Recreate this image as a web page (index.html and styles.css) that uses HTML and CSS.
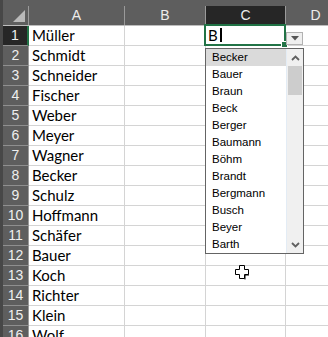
FILE: index.html
```html
<!DOCTYPE html>
<html>
<head>
<meta charset="utf-8">
<link rel="stylesheet" href="styles.css">
</head>
<body>
<div class="sheet">
  <div class="strip"></div>
  <div class="colhead-row">
    <div class="corner"><span class="tri"></span></div>
    <div class="ch cw-a">A</div>
    <div class="ch cw-b">B</div>
    <div class="ch cw-c active">C</div>
    <div class="ch cw-d">D</div>
  </div>
  <div class="rows">
    <div class="row"><div class="rh active">1</div><div class="c cw-a">Müller</div><div class="c cw-b"></div><div class="c cw-c"></div><div class="c cw-d"></div></div>
    <div class="row"><div class="rh">2</div><div class="c cw-a">Schmidt</div><div class="c cw-b"></div><div class="c cw-c"></div><div class="c cw-d"></div></div>
    <div class="row"><div class="rh">3</div><div class="c cw-a">Schneider</div><div class="c cw-b"></div><div class="c cw-c"></div><div class="c cw-d"></div></div>
    <div class="row"><div class="rh">4</div><div class="c cw-a">Fischer</div><div class="c cw-b"></div><div class="c cw-c"></div><div class="c cw-d"></div></div>
    <div class="row"><div class="rh">5</div><div class="c cw-a">Weber</div><div class="c cw-b"></div><div class="c cw-c"></div><div class="c cw-d"></div></div>
    <div class="row"><div class="rh">6</div><div class="c cw-a">Meyer</div><div class="c cw-b"></div><div class="c cw-c"></div><div class="c cw-d"></div></div>
    <div class="row"><div class="rh">7</div><div class="c cw-a">Wagner</div><div class="c cw-b"></div><div class="c cw-c"></div><div class="c cw-d"></div></div>
    <div class="row"><div class="rh">8</div><div class="c cw-a">Becker</div><div class="c cw-b"></div><div class="c cw-c"></div><div class="c cw-d"></div></div>
    <div class="row"><div class="rh">9</div><div class="c cw-a">Schulz</div><div class="c cw-b"></div><div class="c cw-c"></div><div class="c cw-d"></div></div>
    <div class="row"><div class="rh">10</div><div class="c cw-a">Hoffmann</div><div class="c cw-b"></div><div class="c cw-c"></div><div class="c cw-d"></div></div>
    <div class="row"><div class="rh">11</div><div class="c cw-a">Schäfer</div><div class="c cw-b"></div><div class="c cw-c"></div><div class="c cw-d"></div></div>
    <div class="row"><div class="rh">12</div><div class="c cw-a">Bauer</div><div class="c cw-b"></div><div class="c cw-c"></div><div class="c cw-d"></div></div>
    <div class="row"><div class="rh">13</div><div class="c cw-a">Koch</div><div class="c cw-b"></div><div class="c cw-c"></div><div class="c cw-d"></div></div>
    <div class="row"><div class="rh">14</div><div class="c cw-a">Richter</div><div class="c cw-b"></div><div class="c cw-c"></div><div class="c cw-d"></div></div>
    <div class="row"><div class="rh">15</div><div class="c cw-a">Klein</div><div class="c cw-b"></div><div class="c cw-c"></div><div class="c cw-d"></div></div>
    <div class="row"><div class="rh">16</div><div class="c cw-a">Wolf</div><div class="c cw-b"></div><div class="c cw-c"></div><div class="c cw-d"></div></div>
  </div>

  <div class="active-cell"><span class="entry">B</span><span class="caret"></span><span class="handle"></span></div>

  <div class="dd-button">
    <svg width="8" height="5" viewBox="0 0 8 5"><path d="M0 0H8L4 4.5Z" fill="#555"/></svg>
  </div>

  <div class="dd-list">
    <ul class="items">
      <li class="sel">Becker</li>
      <li>Bauer</li>
      <li>Braun</li>
      <li>Beck</li>
      <li>Berger</li>
      <li>Baumann</li>
      <li>Böhm</li>
      <li>Brandt</li>
      <li>Bergmann</li>
      <li>Busch</li>
      <li>Beyer</li>
      <li>Barth</li>
    </ul>
    <div class="scroll">
      <svg class="arr" width="9" height="6" viewBox="0 0 9 6"><path d="M1 5L4.5 1.5L8 5" fill="none" stroke="#606060" stroke-width="1.8"/></svg>
      <div class="track"><div class="thumb"></div></div>
      <svg class="arr" width="9" height="6" viewBox="0 0 9 6"><path d="M1 1L4.5 4.5L8 1" fill="none" stroke="#606060" stroke-width="1.8"/></svg>
    </div>
  </div>

  <svg class="cursor" width="17" height="17" viewBox="0 0 17 17">
    <path d="M5.5 1.5H10.5V5.5H14.5V10.5H10.5V14.5H5.5V10.5H1.5V5.5H5.5Z" fill="#fff" stroke="#000" stroke-width="1"/>
    <path d="M11 15.5V11H15" fill="none" stroke="#000" stroke-width="1"/>
  </svg>
</div>
</body>
</html>
```

FILE: styles.css
```css
html, body {
  margin: 0;
  padding: 0;
  background: #ffffff;
  overflow: hidden;
}

.sheet {
  position: relative;
  width: 328px;
  height: 337px;
  overflow: hidden;
  padding-left: 3px;
  box-sizing: border-box;
  font-family: "Lato", "Liberation Sans", sans-serif;
}

.strip {
  position: absolute;
  left: 0;
  top: 0;
  width: 3px;
  height: 337px;
  background: #474747;
}

.colhead-row {
  display: flex;
  height: 26px;
  background: #5e5e5e;
  border-bottom: 1px solid #bdbdbd;
  box-sizing: border-box;
  align-items: flex-end;
}

.corner {
  width: 26px;
  height: 19px;
  flex: none;
  position: relative;
  border-right: 1px solid #9a9a9a;
  box-sizing: border-box;
}

.corner .tri {
  position: absolute;
  right: 3px;
  bottom: 3px;
  width: 0;
  height: 0;
  border-left: 12px solid transparent;
  border-bottom: 12px solid #b9b9b9;
}

.ch {
  height: 19px;
  flex: none;
  box-sizing: border-box;
  border-right: 1px solid #9a9a9a;
  color: #ececec;
  font-size: 14px;
  line-height: 19px;
  text-align: center;
  font-family: "Liberation Sans", sans-serif;
}

.ch.active {
  background: #262626;
  border-bottom: 2px solid #217346;
  height: 20px;
  margin-bottom: -1px;
  line-height: 18px;
}

.cw-a { width: 96px; }
.cw-b { width: 81px; }
.cw-c { width: 80px; }
.cw-d { width: 60px; }

.rows {
  display: flex;
  flex-direction: column;
}

.row {
  display: flex;
  height: 20px;
}

.rh {
  width: 26px;
  flex: none;
  box-sizing: border-box;
  background: #5e5e5e;
  border-right: 1px solid #9a9a9a;
  border-bottom: 1px solid #8f8f8f;
  color: #efefef;
  font-family: "Liberation Sans", sans-serif;
  font-size: 14px;
  line-height: 19px;
  text-align: center;
}

.rh.active {
  background: #262626;
  border-right: 2px solid #217346;
}

.c {
  flex: none;
  box-sizing: border-box;
  border-right: 1px solid #d4d4d4;
  border-bottom: 1px solid #d4d4d4;
  font-size: 15px;
  line-height: 19px;
  padding-left: 3px;
  color: #000;
  white-space: nowrap;
}

.active-cell {
  position: absolute;
  left: 204px;
  top: 24px;
  width: 82px;
  height: 22px;
  box-sizing: border-box;
  border: 2px solid #217346;
  background: #fff;
  display: flex;
  align-items: center;
  padding-left: 2px;
}

.entry {
  font-size: 15px;
  color: #000;
  line-height: 16px;
}

.caret {
  width: 2px;
  height: 14px;
  background: #000;
  margin-left: 2px;
}

.handle {
  position: absolute;
  right: -4px;
  bottom: -4px;
  width: 5px;
  height: 5px;
  background: #217346;
  border: 1px solid #fff;
}

.dd-button {
  position: absolute;
  left: 286px;
  top: 32px;
  width: 17px;
  height: 13px;
  box-sizing: border-box;
  border: 1px solid #b2b2b2;
  background: #efefef;
  display: flex;
  align-items: center;
  justify-content: center;
}

.dd-list {
  position: absolute;
  left: 205px;
  top: 48px;
  width: 99px;
  height: 206px;
  box-sizing: border-box;
  border: 1px solid #646464;
  background: #fff;
  display: flex;
}

.items {
  list-style: none;
  margin: 0;
  padding: 0;
  flex: 1;
  font-family: "Liberation Sans", sans-serif;
  font-size: 11.5px;
  color: #000;
}

.items li {
  height: 17px;
  line-height: 17px;
  padding-left: 6px;
}

.items li.sel {
  background: #dadada;
}

.scroll {
  width: 17px;
  flex: none;
  background: #f0f0f0;
  border-left: 1px solid #e3ecf5;
  box-sizing: border-box;
  display: flex;
  flex-direction: column;
  align-items: center;
}

.scroll .arr {
  margin: 6px 0 5px;
}

.scroll .arr:last-child {
  margin: 0 0 5px;
}

.track {
  flex: 1;
  width: 100%;
  padding: 0 1px;
  box-sizing: border-box;
}

.thumb {
  height: 29px;
  background: #cdcdcd;
}

.cursor {
  position: absolute;
  left: 234px;
  top: 264px;
}
```
